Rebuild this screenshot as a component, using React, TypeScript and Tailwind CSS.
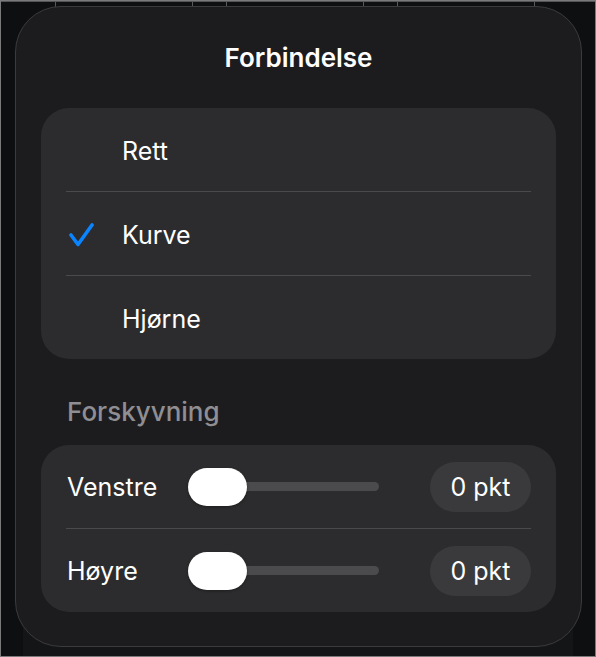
import { type ReactNode } from 'react';

const font = { fontFamily: 'Inter, "Noto Sans", sans-serif' };

function Check() {
  return (
    <svg width="26" height="26" viewBox="0 0 26 26" fill="none">
      <polyline
        points="3,13 10,22.5 24,3"
        stroke="#0a84ff"
        strokeWidth="3.6"
        strokeLinecap="round"
        strokeLinejoin="round"
      />
    </svg>
  );
}

function Divider() {
  return <div className="mx-[25px] h-px bg-[#4a4a4c]" />;
}

function OptionRow({ label, checked }: { label: string; checked?: boolean }) {
  return (
    <div className="flex h-[83px] items-center pt-[3px]">
      <div className="flex w-[81px] items-center pl-[27px]">
        {checked && <Check />}
      </div>
      <span className="text-[25px] leading-[30px] text-white">{label}</span>
    </div>
  );
}

function SliderRow({ label, value }: { label: string; value: string }) {
  return (
    <div className="flex h-[83px] items-center pl-[26px] pr-[25px]">
      <span className="w-[121px] text-[25px] leading-[30px] text-white">
        {label}
      </span>
      <div className="relative flex h-[38px] w-[191px] items-center">
        <div className="h-[9px] w-full rounded-full bg-[#4b4b4d]" />
        <div className="absolute left-0 top-0 h-[38px] w-[59px] rounded-full bg-white shadow-[0_1px_3px_rgba(0,0,0,0.35)]" />
      </div>
      <div className="flex-1" />
      <div className="flex h-[50px] w-[101px] items-center justify-center rounded-full bg-[#3a3a3c] text-[25px] leading-[30px] text-white">
        {value}
      </div>
    </div>
  );
}

function Group({ children }: { children: ReactNode }) {
  return (
    <div className="mx-[25px] rounded-[28px] bg-[#2c2c2e]">{children}</div>
  );
}

export default function App() {
  return (
    <div
      className="relative h-[657px] w-[596px] overflow-hidden border border-[#7a7a7a] bg-[#0e0f10]"
      style={font}
    >
      {/* background behind popover */}
      <div className="flex h-[6px] border-t border-[#555557] pl-[54px]">
        <div className="w-[137px] border-l border-[#5a5a5c]" />
        <div className="w-[34px] border-l border-[#5a5a5c]" />
        <div className="w-[137px] border-l border-[#5a5a5c]" />
        <div className="w-[34px] border-l border-[#5a5a5c]" />
        <div className="w-[137px] border-l border-[#5a5a5c]" />
        <div className="w-px border-l border-[#5a5a5c]" />
      </div>
      <div className="mx-[22px] mt-[560px] h-[90px] bg-[#141516]" />

      {/* popover */}
      <div className="absolute left-[14px] top-[5px] flex h-[641px] w-[567px] flex-col rounded-[46px] border border-[#3b3b3d] bg-[#1c1c1e]">
        <div className="flex h-[101px] items-center justify-center">
          <span className="text-[26px] font-semibold leading-[30px] text-white">
            Forbindelse
          </span>
        </div>

        <Group>
          <OptionRow label="Rett" />
          <Divider />
          <OptionRow label="Kurve" checked />
          <Divider />
          <OptionRow label="Hjørne" />
        </Group>

        <div className="pb-[18px] pl-[51px] pt-[38px]">
          <span className="text-[26px] font-medium leading-[30px] text-[#8e8e93]">
            Forskyvning
          </span>
        </div>

        <Group>
          <SliderRow label="Venstre" value="0 pkt" />
          <Divider />
          <SliderRow label="Høyre" value="0 pkt" />
        </Group>
      </div>
    </div>
  );
}
